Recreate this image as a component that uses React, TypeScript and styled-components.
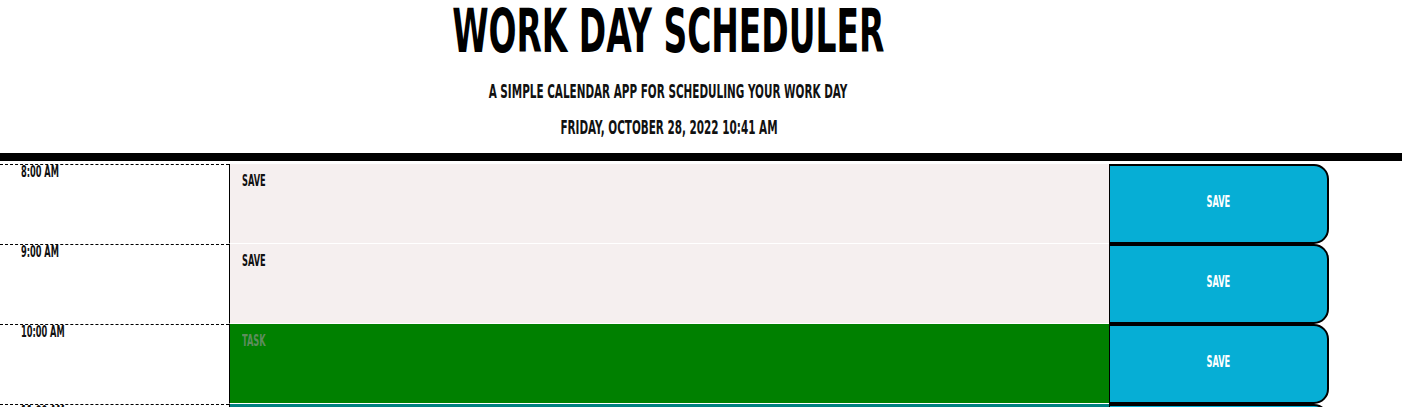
import React from "react";
import styled, { createGlobalStyle } from "styled-components";

const GlobalStyle = createGlobalStyle`
  body {
    margin: 0;
    background: #fff;
    font-family: "DejaVu Sans Condensed", "Liberation Sans", sans-serif;
    font-weight: 700;
    text-transform: uppercase;
  }
`;

// no condensed display face offline, so squeeze the DejaVu glyphs sideways
const Squeeze = styled.span<{ $origin?: string }>`
  display: inline-block;
  white-space: nowrap;
  transform: scaleX(0.61);
  transform-origin: ${(p) => p.$origin ?? "center"};
`;

const Header = styled.header`
  text-align: center;
  padding-right: 65px;
  border-bottom: 8px solid #000;
`;

const Title = styled.h1`
  margin: 0;
  padding-top: 1px;
  font-size: 60px;
  line-height: 60px;
  font-weight: 700;
  color: #000;
`;

const Lead = styled.p`
  margin: 21px 0 0;
  font-size: 19px;
  line-height: 19px;
  color: #111;
`;

const Today = styled.p`
  margin: 17px 0 16px;
  font-size: 19px;
  line-height: 19px;
  color: #111;
`;

const Rows = styled.main`
  padding-top: 3px;
`;

const Row = styled.div`
  display: flex;
  height: 80px;
`;

const Hour = styled.div`
  width: 229px;
  box-sizing: border-box;
  border-top: 1px dashed #000;
  padding: 0 0 0 21px;
  font-size: 15px;
  line-height: 15px;
  color: #111;
`;

type Slot = "past" | "present" | "future";

const blockColor: Record<Slot, string> = {
  past: "#f5efef",
  present: "#008000",
  future: "#008080",
};

const Description = styled.div<{ $slot: Slot; $empty: boolean }>`
  width: 880px;
  box-sizing: border-box;
  border-left: 1px solid #000;
  border-bottom: 1px solid #fff;
  padding: 10px 12px;
  background: ${(p) => blockColor[p.$slot]};
  font-size: 15px;
  line-height: 15px;
  color: ${(p) => (p.$empty ? "#5d8d5d" : "#111")};
`;

const SaveButton = styled.button`
  width: 220px;
  box-sizing: border-box;
  margin: 0;
  padding: 0 0 3px;
  background: #06aed5;
  border: 2px solid #000;
  border-left-width: 1px;
  border-radius: 0 15px 15px 0;
  font-family: inherit;
  font-size: 15px;
  font-weight: 700;
  line-height: 15px;
  text-transform: uppercase;
  color: #fff;
  cursor: pointer;
`;

const hours: { label: string; slot: Slot; text: string }[] = [
  { label: "8:00 AM", slot: "past", text: "Save" },
  { label: "9:00 AM", slot: "past", text: "Save" },
  { label: "10:00 AM", slot: "present", text: "" },
  { label: "11:00 AM", slot: "future", text: "" },
];

export default function App() {
  return (
    <>
      <GlobalStyle />
      <Header>
        <Title>
          <Squeeze>Work Day Scheduler</Squeeze>
        </Title>
        <Lead>
          <Squeeze>A simple calendar app for scheduling your work day</Squeeze>
        </Lead>
        <Today>
          <Squeeze>Friday, October 28, 2022 10:41 AM</Squeeze>
        </Today>
      </Header>
      <Rows>
        {hours.map((h) => (
          <Row key={h.label}>
            <Hour>
              <Squeeze $origin="left">{h.label}</Squeeze>
            </Hour>
            <Description $slot={h.slot} $empty={!h.text}>
              <Squeeze $origin="left">{h.text || "Task"}</Squeeze>
            </Description>
            <SaveButton>
              <Squeeze>Save</Squeeze>
            </SaveButton>
          </Row>
        ))}
      </Rows>
    </>
  );
}
